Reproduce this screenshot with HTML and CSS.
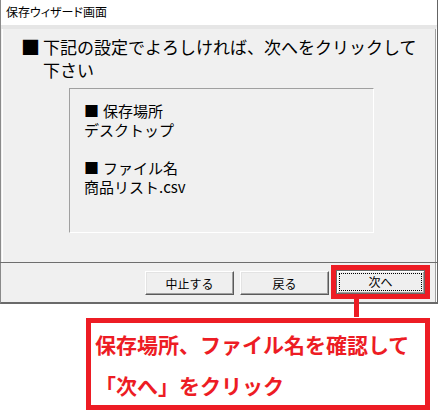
FILE: index.html
```html
<!DOCTYPE html>
<html lang="ja">
<head>
    <meta charset="UTF-8">
    <meta name="viewport" content="width=device-width, initial-scale=1.0">
    <title>保存ウィザード画面</title>
    <link rel="stylesheet" href="styles.css">
</head>
<body>
    <div class="window">
        <div class="titlebar">保存ウィザード画面</div>

        <div class="client">
            <div class="panel">
                <div class="lead">
                    <span class="lead-mark">■</span>
                    <div class="lead-text">
                        <p>下記の設定でよろしければ、次へをクリックして</p>
                        <p>下さい</p>
                    </div>
                </div>

                <div class="summary">
                    <p><span class="mark">■</span>保存場所</p>
                    <p>デスクトップ</p>
                    <p class="spacer"></p>
                    <p><span class="mark">■</span>ファイル名</p>
                    <p>商品リスト.csv</p>
                </div>
            </div>

            <div class="rule"></div>

            <div class="buttons">
                <button type="button" class="btn">中止する</button>
                <button type="button" class="btn">戻る</button>
                <span class="highlight">
                    <button type="button" class="btn btn-default"><span class="focus-ring">次へ</span></button>
                </span>
            </div>
        </div>
    </div>

    <div class="callout">
        <p>保存場所、ファイル名を確認して</p>
        <p>「次へ」をクリック</p>
    </div>
</body>
</html>
```

FILE: styles.css
```css
* {
    margin: 0;
    padding: 0;
    box-sizing: border-box;
}

body {
    font-family: "Noto Sans CJK JP", "Liberation Sans", sans-serif;
    background: #fff;
    color: #000;
    width: 439px;
    height: 411px;
    overflow: hidden;
}

/* dialog window */
.window {
    width: 438px;
    border-left: 1px solid #8a8a8a;
    border-right: 1px solid #646464;
    border-bottom: 2px solid #6a6a6a;
    background: #f0f0f0;
}

.titlebar {
    height: 25px;
    background: #fff;
    padding: 3px 0 0 5px;
    font-size: 12px;
    line-height: 18px;
    font-feature-settings: "palt";
}

.client {
    border-top: 4px solid #e6e6e6;
    border-right: 1px solid #fff;
}

.panel {
    height: 233px;
    margin-left: 1px;
    border-left: 1px solid #fff;
    border-right: 1px solid #a0a0a0;
    padding: 6px 0 0 18px;
}

.lead {
    display: flex;
    align-items: flex-start;
}

.lead-mark {
    width: 22px;
    font-size: 19px;
    line-height: 23px;
    flex-shrink: 0;
}

.lead-text {
    font-size: 17px;
    line-height: 23px;
}

.summary {
    width: 305px;
    height: 145px;
    margin: 7px 0 0 48px;
    border-top: 1px solid #a0a0a0;
    border-left: 1px solid #a0a0a0;
    border-right: 1px solid #fff;
    border-bottom: 1px solid #fff;
    padding: 12px 0 0 14px;
    font-size: 15px;
    line-height: 19px;
}

.spacer {
    height: 19px;
}

.mark {
    display: inline-block;
    width: 19px;
}

.rule {
    height: 1px;
    margin-left: -1px;
    margin-right: -1px;
    background: #6e6e6e;
}

/* button row */
.buttons {
    height: 39px;
    display: flex;
    justify-content: flex-end;
    align-items: flex-start;
    gap: 6px;
    padding: 8px 10px 0 0;
    border-right: 1px solid #a0a0a0;
}

.btn {
    width: 89px;
    height: 24px;
    font-family: "Noto Sans CJK JP", sans-serif;
    font-size: 12px;
    color: #000;
    background: #efefef;
    border-top: 1px solid #fff;
    border-left: 1px solid #fff;
    border-right: 1px solid #5a5a5a;
    border-bottom: 1px solid #5a5a5a;
    box-shadow: inset -1px -1px 0 #a0a0a0, inset 1px 1px 0 #e3e3e3;
}

.btn-default {
    display: block;
    border: 1px solid #6a6a6a;
    box-shadow: inset 1px 1px 0 #fff, inset -1px -1px 0 #a0a0a0;
    padding: 2px;
}

.focus-ring {
    display: block;
    height: 100%;
    line-height: 16px;
    border: 1px dotted #000;
}

/* red annotation */
.highlight {
    position: relative;
    display: block;
    margin: -6px -5px 0 -4px;
    border: 5px solid #ed1c24;
}

.highlight::after {
    content: "";
    position: absolute;
    left: 18px;
    top: 29px;
    width: 5px;
    height: 18px;
    background: #ed1c24;
}

.callout {
    width: 344px;
    height: 92px;
    margin: 14px 0 0 86px;
    border: 5px solid #ed1c24;
    padding: 1px 0 0 4px;
    color: #ed1c24;
    font-size: 21px;
    font-weight: 700;
    line-height: 41px;
    white-space: nowrap;
}
```
